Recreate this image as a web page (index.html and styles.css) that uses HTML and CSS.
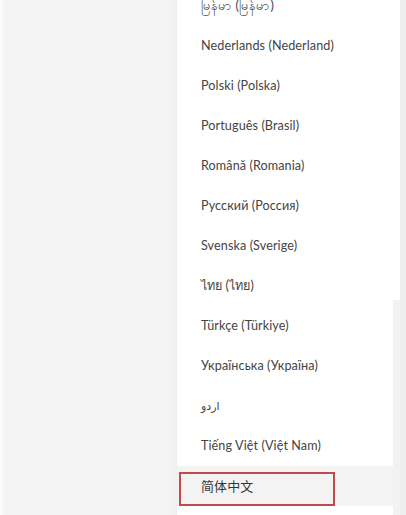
FILE: index.html
```html
<!DOCTYPE html>
<html lang="en">
<head>
    <meta charset="UTF-8">
    <title>Language</title>
    <link rel="stylesheet" href="styles.css">
</head>
<body>
<div class="screen">
    <!-- 左侧灰色背景 -->
    <div class="backdrop"></div>

    <!-- 语言列表 -->
    <div class="lang-panel">
        <ul class="lang-list">
            <li class="lang-item">မြန်မာ (မြန်မာ)</li>
            <li class="lang-item">Nederlands (Nederland)</li>
            <li class="lang-item">Polski (Polska)</li>
            <li class="lang-item">Português (Brasil)</li>
            <li class="lang-item">Română (Romania)</li>
            <li class="lang-item">Русский (Россия)</li>
            <li class="lang-item">Svenska (Sverige)</li>
            <li class="lang-item">ไทย (ไทย)</li>
            <li class="lang-item">Türkçe (Türkiye)</li>
            <li class="lang-item">Українська (Україна)</li>
            <li class="lang-item lang-rtl">اردو</li>
            <li class="lang-item">Tiếng Việt (Việt Nam)</li>
            <li class="lang-item is-active">简体中文<span class="mark-box"></span></li>
            <li class="lang-item"></li>
        </ul>
        <div class="scroll-thumb"></div>
    </div>

    <div class="edge"></div>
</div>
</body>
</html>
```

FILE: styles.css
```css
/* 基础 */
html, body {
    margin: 0;
    padding: 0;
    height: 100%;
    overflow: hidden;
}

body {
    background: #f4f4f4;
    font-family: 'Lato', 'Noto Sans', 'DejaVu Sans', 'Noto Sans CJK SC', sans-serif;
    color: #444444;
}

.screen {
    display: flex;
    height: 515px;
}

.backdrop {
    width: 177px;
    flex-shrink: 0;
    background: linear-gradient(90deg, #fbfbfb 0, #fbfbfb 3px, #f4f4f4 3px, #f4f4f4 170px, #efefef 177px);
}

.lang-panel {
    position: relative;
    width: 223px;
    flex-shrink: 0;
    background: #ffffff;
    overflow: hidden;
}

.edge {
    flex: 1;
    background: #eeeeee;
}

/* 列表 */
.lang-list {
    list-style: none;
    margin: -14px 0 0 0;
    padding: 0;
}

.lang-item {
    position: relative;
    height: 40px;
    line-height: 40px;
    padding-left: 24px;
    font-size: 12.6px;
    letter-spacing: 0.1px;
    margin-right: 7px;
    white-space: nowrap;
}

.lang-rtl {
    font-size: 11px;
}

.lang-item.is-active {
    background: #f3f3f3;
    font-family: 'Noto Sans CJK SC', sans-serif;
    font-size: 13px;
    color: #333333;
}

/* 红框标注 */
.mark-box {
    position: absolute;
    left: 2px;
    top: 6px;
    width: 152px;
    height: 30px;
    border: 2px solid #c24a4a;
}

.scroll-thumb {
    position: absolute;
    right: 0;
    top: 300px;
    width: 7px;
    bottom: 0;
    background: #f2f2f2;
}
```
